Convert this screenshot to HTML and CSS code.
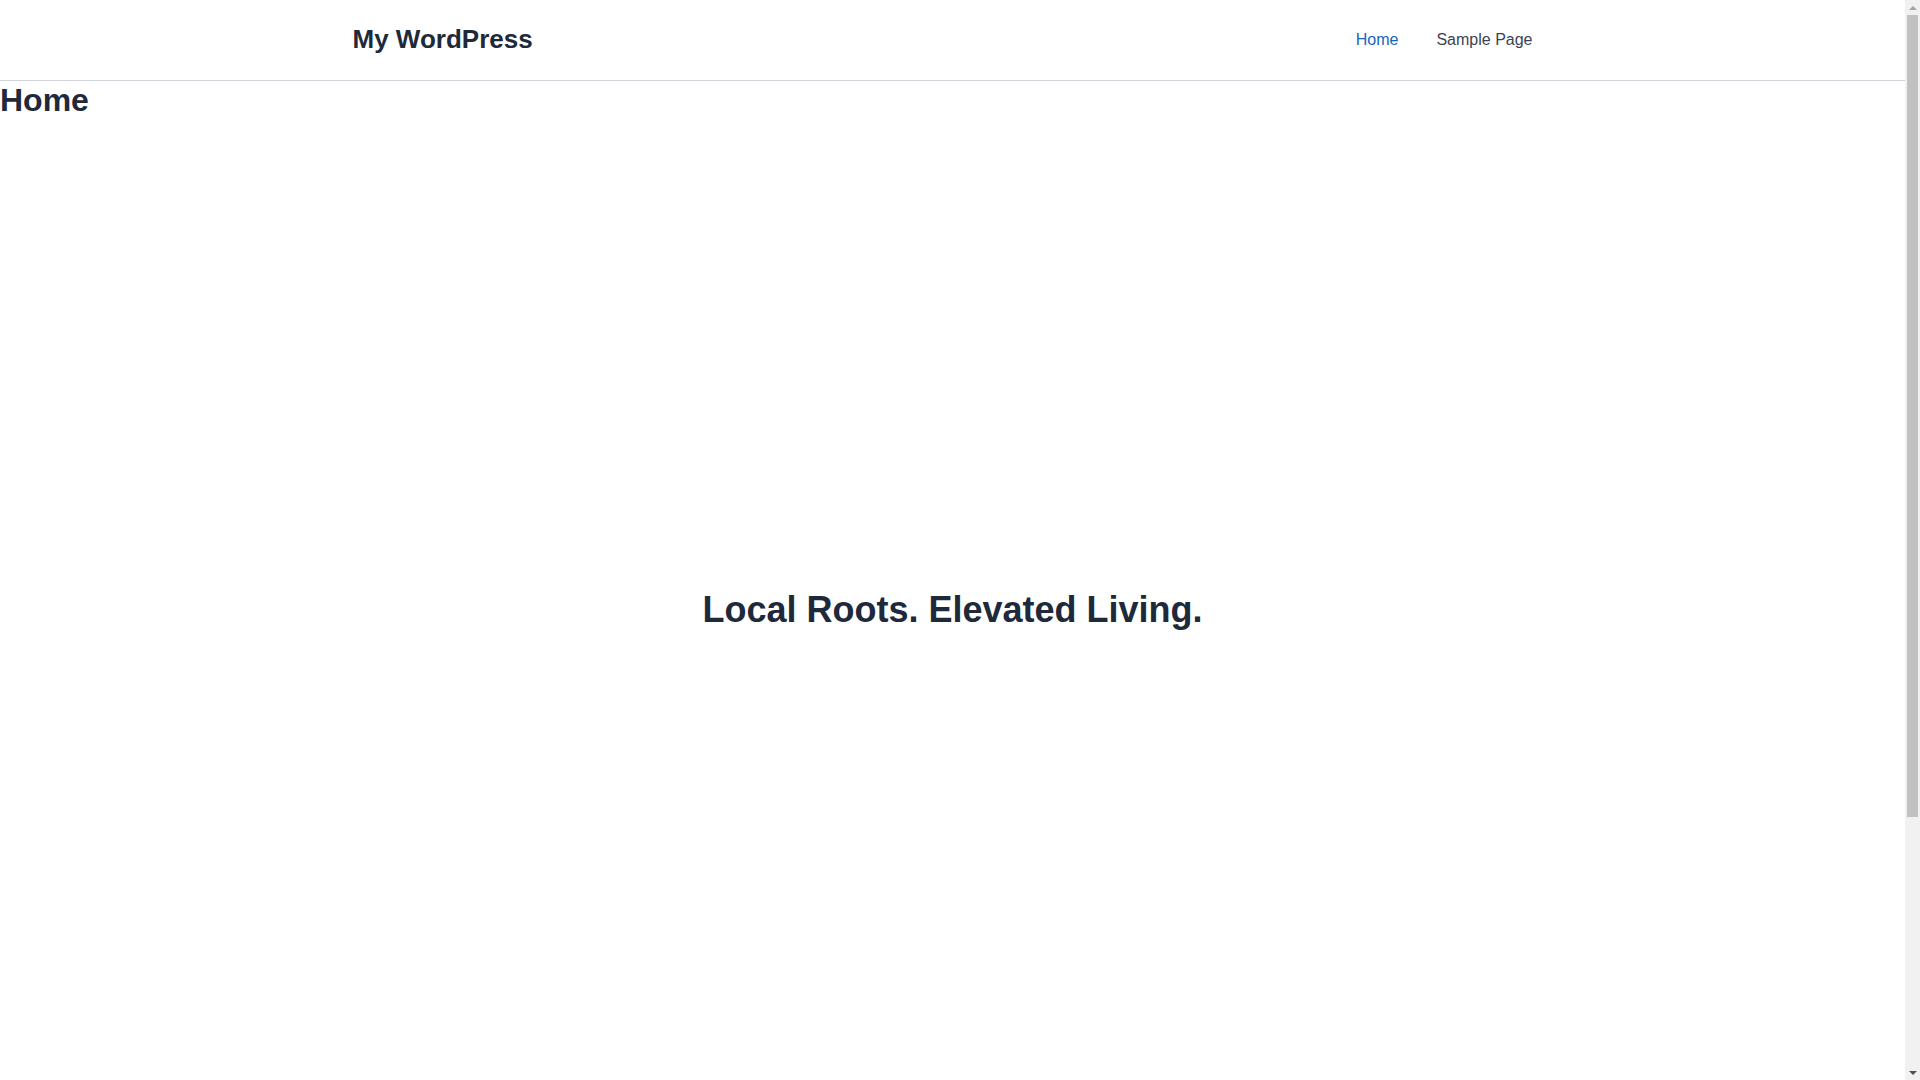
FILE: index.html
```html
<!DOCTYPE html>
<html lang="en">
<head>
<meta charset="utf-8">
<title>My WordPress</title>
<link rel="stylesheet" href="styles.css">
</head>
<body>
<div class="page">
  <header class="site-header">
    <div class="container header-inner">
      <a class="site-title" href="#">My WordPress</a>
      <nav class="main-nav">
        <a class="nav-link active" href="#">Home</a>
        <a class="nav-link" href="#">Sample Page</a>
      </nav>
    </div>
  </header>
  <main class="site-main">
    <h1 class="entry-title">Home</h1>
    <section class="hero">
      <h2 class="hero-title">Local Roots. Elevated Living.</h2>
    </section>
    <section class="after-hero"></section>
  </main>
</div>
<div class="scrollbar" aria-hidden="true">
  <span class="sb-arrow sb-up"></span>
  <span class="sb-thumb"></span>
  <span class="sb-arrow sb-down"></span>
</div>
</body>
</html>
```

FILE: styles.css
```css
html, body {
  margin: 0;
  padding: 0;
  background: #ffffff;
}

body {
  font-family: "Liberation Sans", Arial, sans-serif;
  color: #1e293b;
}

a {
  text-decoration: none;
}

.page {
  width: calc(100vw - 15px);
}

.site-header {
  height: 80px;
  border-bottom: 1px solid #d1d5db;
  background: #ffffff;
}

.container {
  max-width: 1200px;
  margin: 0 auto;
}

.header-inner {
  height: 100%;
  display: flex;
  align-items: center;
  justify-content: space-between;
}

.site-title {
  font-size: 26px;
  font-weight: 700;
  color: #1e293b;
  line-height: 1.2;
}

.main-nav {
  display: flex;
  align-items: center;
  padding-right: 1px;
}

.nav-link {
  font-size: 16px;
  line-height: 1.5;
  padding: 0 19px;
  color: #3b4454;
}

.nav-link.active {
  color: #1565c0;
}

.entry-title {
  margin: 0;
  font-size: 32px;
  line-height: 1.2;
  font-weight: 700;
  color: #1e293b;
}

.hero {
  height: 980px;
  display: flex;
  align-items: center;
  justify-content: center;
}

.hero-title {
  margin: 0;
  font-size: 36px;
  line-height: 1.2;
  font-weight: 700;
  color: #1e293b;
  text-align: center;
}

.after-hero {
  height: 315px;
}

/* static imitation of the classic browser scrollbar in the reference */
.scrollbar {
  position: fixed;
  top: 0;
  right: 0;
  width: 15px;
  height: 100vh;
  background: #f1f1f1;
  display: flex;
  flex-direction: column;
  align-items: center;
}

.sb-arrow {
  height: 15px;
  width: 15px;
  flex: none;
  display: flex;
  align-items: center;
  justify-content: center;
}

.sb-arrow::before {
  content: "";
  width: 0;
  height: 0;
  border-left: 4px solid transparent;
  border-right: 4px solid transparent;
}

.sb-up::before {
  border-bottom: 4px solid #a3a3a3;
}

.sb-down {
  margin-top: auto;
}

.sb-down::before {
  border-top: 4px solid #505050;
}

.sb-thumb {
  width: 11px;
  height: 802px;
  margin-left: 2px;
  margin-right: 2px;
  background: #c1c1c1;
  flex: none;
}
```
